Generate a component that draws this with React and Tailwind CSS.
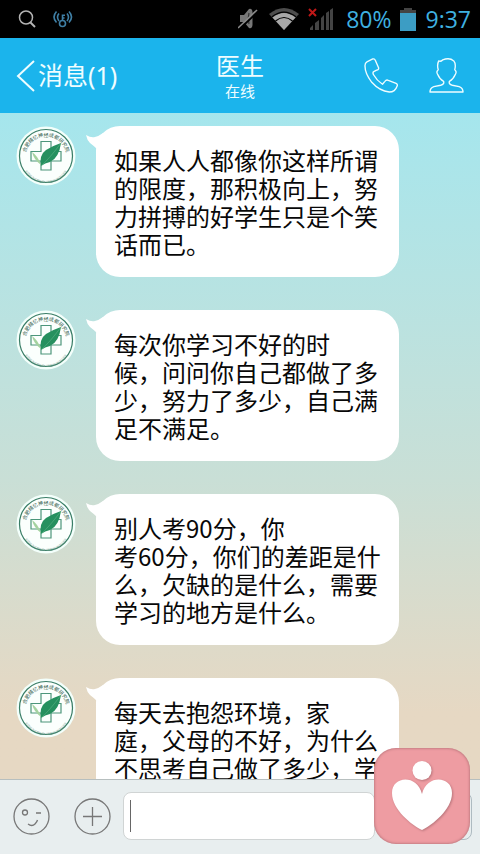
const messages = [
  "如果人人都像你这样所谓\n的限度，那积极向上，努\n力拼搏的好学生只是个笑\n话而已。",
  "每次你学习不好的时\n候，问问你自己都做了多\n少，努力了多少，自己满\n足不满足。",
  "别人考90分，你\n考60分，你们的差距是什\n么，欠缺的是什么，需要\n学习的地方是什么。",
  "每天去抱怨环境，家\n庭，父母的不好，为什么\n不思考自己做了多少，学",
];

function StatusBar() {
  return (
    <div className="flex h-[38px] shrink-0 items-center bg-black pr-[9px] pl-[18px] text-[#3fb1e0]">
      <svg width="18" height="18" viewBox="0 0 18 18" fill="none" stroke="#b4b4b4" strokeWidth="1.5">
        <circle cx="8" cy="7.5" r="6.5" />
        <path d="M12.5 12.5 L17 17" strokeWidth="2" />
      </svg>
      <svg className="ml-4" width="22" height="18" viewBox="0 0 22 18" fill="none" stroke="#3f7fa5" strokeWidth="1.6">
        <circle cx="10.5" cy="13.5" r="3" />
        <path d="M10.5 10.5 V4.5 M10.5 5.2 H13 M10.5 8 H12.5" />
        <path d="M7 3.5 Q4 7 7 11 M4.5 1.5 Q-.5 7 4.5 12.5 M15 3.5 Q18 7 15 11 M17 1.5 Q22 7 17 12.5" />
      </svg>
      <div className="ml-auto flex items-center">
        <svg width="20" height="22" viewBox="0 0 20 22">
          <path d="M2 7 H6 L11 1 Q14 0 14.500 4 V17 Q14 21 11 20 L6 14 H2 Z" fill="#777" />
          <path d="M11 5 Q9.500 10 11 16" fill="none" stroke="#333" strokeWidth="1.2" />
          <path d="M1 21.500 L19 4.500" stroke="#000" strokeWidth="2" />
          <path d="M0 20 L19 2" stroke="#8a8a8a" strokeWidth="1.6" />
        </svg>
        <svg className="ml-[10px]" width="32" height="24" viewBox="0 0 32 24">
          <path d="M1 7 Q16 -5 31 7 L16 23 Z" fill="#4d4d4d" />
          <path d="M4.5 10.5 Q16 1.500 27.500 10.500 L16 23 Z" fill="#a8a8a8" />
          <path d="M4 9.800 Q16 .5 28 9.800 M7.500 14 Q16 7 24.500 14" fill="none" stroke="#000" strokeWidth="1.2" />
        </svg>
        <svg className="ml-2" width="26" height="24" viewBox="0 0 26 24">
          <path d="M2 23 V21 L5 18 V23 Z M7 23 V16 L11 13 V23 Z M13 23 V11 L16 8 V23 Z M18 23 V6 L21 4 V23 Z M22 23 V3 L25 1 V23 Z" fill="#444" />
          <path d="M1 2 L8 9 M8 2 L1 9" stroke="#c01818" strokeWidth="2" />
        </svg>
        <span className="ml-3 font-['Open_Sans',sans-serif] text-[23px]">80%</span>
        <svg className="ml-2" width="16" height="24" viewBox="0 0 16 24">
          <path d="M0 3 H4 V1 H12 V3 H16 V6 H0 Z" fill="#444" />
          <path d="M0 6 H16 V24 H0 Z" fill="#3c9dc4" />
        </svg>
        <span className="ml-[10px] font-['Open_Sans',sans-serif] text-[23px]">9:37</span>
      </div>
    </div>
  );
}

function Header() {
  return (
    <header className="grid h-[75px] shrink-0 grid-cols-[1fr_auto_1fr] items-center bg-[#1bb4ec] px-4 text-[#effdff]">
      <button type="button" className="flex items-center gap-[3px] text-left text-[25px]">
        <svg width="19" height="34" viewBox="0 0 19 34" fill="none" stroke="currentColor" strokeWidth="2">
          <path d="M18 2 L2 17 L18 32" />
        </svg>
        消息(1)
      </button>
      <div className="pt-[2px] text-center">
        <h1 className="text-2xl leading-7">医生</h1>
        <p className="text-[15px] leading-[22px]">在线</p>
      </div>
      <div className="flex justify-end gap-[30px]">
        <button type="button" aria-label="Call">
          <svg width="35" height="35" viewBox="0 0 36 36" fill="none" stroke="currentColor" strokeWidth="1.4" strokeLinejoin="round">
            <path d="M3 4 L9 1 Q11 .5 11.500 2 L15 10 Q15.500 12 13 12.500 L10 14 Q8.500 15 10 17.500 Q13 23 19 27 L21.500 24 Q23 22 25 23 L33 26 Q35 27 34 29 Q32 35 26 35 Q16 34 8 25 Q1 16 1 8 Q1 5 3 4 Z" />
          </svg>
        </button>
        <button type="button" aria-label="Contact">
          <svg width="35" height="35" viewBox="0 0 36 36" fill="none" stroke="currentColor" strokeWidth="1.4" strokeLinejoin="round">
            <path d="M10 3 Q12 4 14 2 Q21 -1 25.500 3 Q28 6 26.500 12 Q29 14 27 17 Q25 22 21 24 Q20 27 24 28 L31 29.500 Q35 31 35 35 H1 Q1 31 5 29.500 L12 28 Q16 27 15 24 Q11 22 9 17 Q7 14 9.500 12 Q8 7 10 3 Z" />
          </svg>
        </button>
      </div>
    </header>
  );
}

function Avatar({ id }) {
  return (
    <svg className="shrink-0" width="60" height="60" viewBox="0 0 60 60" role="img" aria-label="医生">
      <defs>
        <path id={`top-${id}`} d="M13 42.500 A20.500 20.500 0 1 1 47 42.500" />
        <path id={`bottom-${id}`} d="M6 33 A24 24 0 0 0 54 33" />
      </defs>
      <circle cx="30" cy="30" r="29.500" fill="#f3fffb" />
      <circle cx="30" cy="30" r="26.500" fill="#fbfffd" stroke="#397d66" strokeWidth="1.2" />
      <text fill="#35604f" fontSize="5">
        <textPath href={`#top-${id}`} startOffset="50%" textAnchor="middle">合肥精忆神经成都研究院</textPath>
      </text>
      <text fill="#73a08f" fontSize="3">
        <textPath href={`#bottom-${id}`} startOffset="50%" textAnchor="middle">HEFEI INSTITUTE OF TECHNOLOGY</textPath>
      </text>
      <path d="M25 15.500 H35 V25.500 H45 V35 H35 V44 H25 V35 H15 V25.500 H25 Z" fill="none" stroke="#4c967b" strokeWidth="1.2" />
      <path d="M25 40 Q23 29 30 24 Q36 20 45 17 Q43 32 34 36 Q29 37 25 40 Z" fill="#26905f" />
      <path d="M25 40 Q34 32 45 17" fill="none" stroke="#5bb185" strokeWidth=".6" />
      <path d="M16 26 Q22 30 25 39 Q18 34 16 26 Z" fill="#a4d29f" />
    </svg>
  );
}

function Message({ text, id }) {
  return (
    <li className="flex items-start pl-4">
      <Avatar id={id} />
      <div className="relative ml-5 w-full max-w-[303px] rounded-[24px] bg-white pt-5 pr-3 pb-[19px] pl-[18px]">
        <svg className="absolute top-1 -left-[10px]" width="24" height="20" viewBox="0 0 24 20">
          <path d="M0 5 Q5 8 9 7 Q13 6 17 3 L22 8 L11 19 Q8 16 4 13 Q1 10 0 5 Z" fill="white" />
        </svg>
        <p className="font-['Noto_Sans_CJK_SC',sans-serif] text-2xl leading-7 whitespace-pre-line text-[#080808]">{text}</p>
      </div>
    </li>
  );
}

function Composer() {
  return (
    <form className="flex h-[75px] shrink-0 items-center border-t border-[#b7bfbf] bg-[#e8eeef] pr-2 pb-[2px] pl-[13px]">
      <button type="button" aria-label="Emoji">
        <svg width="37" height="37" viewBox="0 0 37 37" fill="none" stroke="#777" strokeWidth="1.3">
          <circle cx="18.500" cy="18.500" r="17.500" />
          <circle cx="12" cy="14.500" r="2.500" />
          <path d="M23 15 H28 M15 26 Q19 29 22 26 Q24 24 24.500 22" />
        </svg>
      </button>
      <button type="button" aria-label="More" className="ml-6">
        <svg width="37" height="37" viewBox="0 0 37 37" fill="none" stroke="#777" strokeWidth="1.3">
          <circle cx="18.500" cy="18.500" r="17.500" />
          <path d="M9 18.500 H28 M18.500 9 V28" />
        </svg>
      </button>
      <div className="ml-3 flex h-12 min-w-0 flex-1 items-center rounded-lg border border-[#d0d4d4] bg-white pl-[6px]">
        <span className="h-8 w-px bg-[#666]" />
        <input aria-label="Message" className="min-w-0 flex-1 bg-transparent text-2xl outline-none" />
      </div>
      <button type="button" aria-label="Send" className="ml-1 h-12 w-[93px] rounded-lg border border-[#aebbc1] bg-[#e8eeef]" />
    </form>
  );
}

export default function App() {
  return (
    <div className="relative flex h-screen flex-col overflow-hidden font-['Noto_Sans','Noto_Sans_CJK_SC',sans-serif]">
      <StatusBar />
      <Header />
      <main className="min-h-0 flex-1 overflow-hidden bg-linear-to-b from-[#a5e6ed] from-0% via-[#c9dfd6] via-55% to-[#e6d8c3] to-90% pt-[13px]">
        <ul className="flex flex-col gap-[33px]">
          {messages.map((text, index) => (
            <Message key={text} text={text} id={index} />
          ))}
        </ul>
      </main>
      <Composer />
      <button type="button" aria-label="Favorite" className="absolute right-[10px] bottom-[10px] rounded-[22px] bg-[#ee9ca2] shadow-[inset_0_0_3px_#9f6268]">
        <svg className="drop-shadow-[1px_1px_1px_#b9757b]" width="96" height="96" viewBox="0 0 96 96" fill="white">
          <circle cx="48" cy="22.500" r="9.500" />
          <path d="M48 82 C38 77 18 62 18 45 C18 28 43 26 48 46 C53 26 78 28 78 45 C78 62 58 77 48 82 Z" />
        </svg>
      </button>
    </div>
  );
}
